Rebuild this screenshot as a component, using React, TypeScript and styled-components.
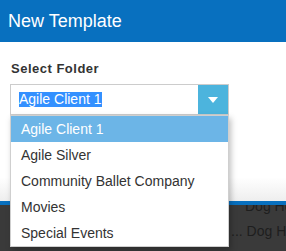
import styled, { createGlobalStyle } from "styled-components";

const folders = [
	"Agile Client 1",
	"Agile Silver",
	"Community Ballet Company",
	"Movies",
	"Special Events",
];

const GlobalStyle = createGlobalStyle`
	html, body {
		margin: 0;
		padding: 0;
		background: #3a3a3a;
	}
	body {
		font-family: "Liberation Sans", Arial, sans-serif;
	}
`;

const App: React.FC = () => {
	return (
		<Page>
			<GlobalStyle />
			<Header>
				<Title>New Template</Title>
			</Header>
			<Body>
				<Label>Select Folder</Label>
				<SelectWrap>
					<Select>
						<Value>
							<Selected>Agile Client 1</Selected>
						</Value>
						<Arrow>
							<svg width='10' height='6' viewBox='0 0 10 6'>
								<path d='M0 0 L10 0 L5 6 Z' fill='#fff' />
							</svg>
						</Arrow>
					</Select>
					<List>
						{folders.map((f, i) => (
							<Item key={f} $active={i === 0}>
								{f}
							</Item>
						))}
					</List>
				</SelectWrap>
			</Body>
			<FooterLine />
			<Backdrop>
				<BackRow $first>Dog House Rules</BackRow>
				<BackRow>... Dog House Rules</BackRow>
			</Backdrop>
		</Page>
	);
};

export default App;

const Page = styled.div`
	width: 286px;
	height: 251px;
	display: flex;
	flex-direction: column;
	overflow: hidden;
`;

const Header = styled.header`
	height: 42px;
	background: #0870bf;
	display: flex;
	align-items: center;
	padding-left: 8px;
	flex-shrink: 0;
`;

const Title = styled.h1`
	margin: 0;
	color: #fff;
	font-size: 18px;
	font-weight: normal;
	line-height: 1;
`;

const Body = styled.section`
	height: 159px;
	flex-shrink: 0;
	box-sizing: border-box;
	padding: 19px 0 0 10px;
	background: linear-gradient(to bottom, #fff 85%, #eeeeee 100%);
	position: relative;
	z-index: 2;
`;

const Label = styled.div`
	padding-left: 1px;
	font-size: 13px;
	font-weight: bold;
	letter-spacing: 0.5px;
	color: #333;
	line-height: 15px;
	margin-bottom: 8px;
`;

const SelectWrap = styled.div`
	position: relative;
	width: 219px;
`;

const Select = styled.div`
	display: flex;
	height: 31px;
	box-sizing: border-box;
	border: 1px solid #cccccc;
	background: #fff;
`;

const Value = styled.div`
	flex: 1;
	display: flex;
	align-items: center;
	padding-left: 8px;
	font-size: 14px;
`;

const Selected = styled.span`
	background: #3390ff;
	color: #fff;
	line-height: 15px;
`;

const Arrow = styled.div`
	width: 30px;
	background: #4cb4dd;
	display: flex;
	align-items: center;
	justify-content: center;
`;

const List = styled.ul`
	position: absolute;
	top: 31px;
	left: 0;
	width: 219px;
	box-sizing: border-box;
	margin: 0;
	padding: 0;
	list-style: none;
	background: #fff;
	border: 1px solid #cfcfcf;
	box-shadow: 2px 3px 6px rgba(0, 0, 0, 0.25);
	z-index: 5;
`;

const Item = styled.li<{ $active?: boolean }>`
	height: 26px;
	display: flex;
	align-items: center;
	padding-left: 10px;
	font-size: 14px;
	color: ${(p) => (p.$active ? "#fff" : "#333")};
	background: ${(p) => (p.$active ? "#6cb5e7" : "#fff")};
`;

const FooterLine = styled.div`
	height: 4px;
	flex-shrink: 0;
	background: #0870bf;
	position: relative;
	z-index: 1;
`;

const Backdrop = styled.div`
	flex: 1;
	background: #3a3a3a;
	overflow: hidden;
`;

const BackRow = styled.div<{ $first?: boolean }>`
	height: 25px;
	line-height: 25px;
	margin-top: ${(p) => (p.$first ? "-11px" : "0")};
	padding-left: ${(p) => (p.$first ? "245px" : "231px")};
	white-space: nowrap;
	font-size: 14px;
	color: #1e1e1e;
`;
